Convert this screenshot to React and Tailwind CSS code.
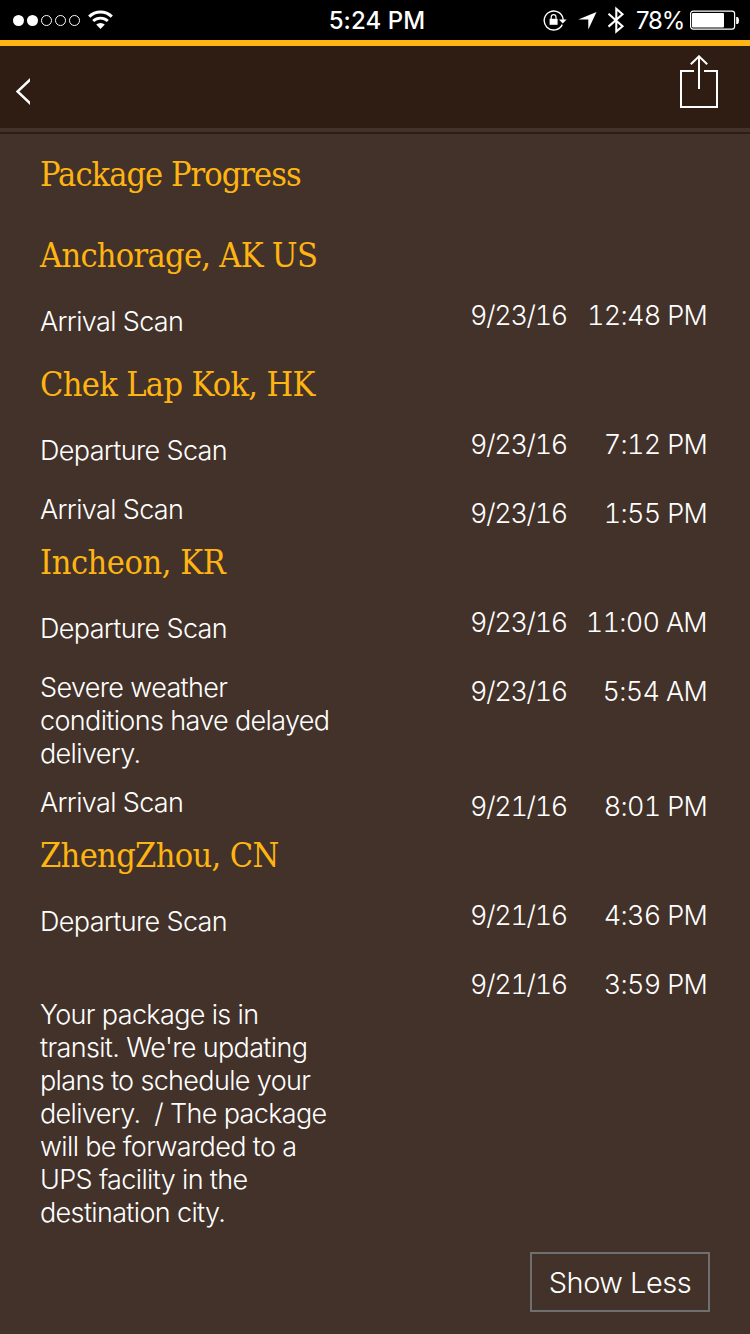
const sections = [
  {
    place: "Anchorage, AK US",
    gap: "mt-[41px]",
    track: "tracking-[-0.7px]",
    scans: [{ label: "Arrival Scan", date: "9/23/16", time: "12:48 PM", row: "", left: "pt-1.5", right: "" }],
  },
  {
    place: "Chek Lap Kok, HK",
    gap: "mt-[26px]",
    track: "tracking-[-0.65px]",
    scans: [
      { label: "Departure Scan", date: "9/23/16", time: "7:12 PM", row: "", left: "pt-1.5", right: "" },
      { label: "Arrival Scan", date: "9/23/16", time: "1:55 PM", row: "mt-[26px]", left: "", right: "pt-1" },
    ],
  },
  {
    place: "Incheon, KR",
    gap: "mt-3",
    track: "tracking-[-0.45px]",
    scans: [
      { label: "Departure Scan", date: "9/23/16", time: "11:00 AM", row: "", left: "pt-1.5", right: "" },
      {
        label: "Severe weather\nconditions have delayed\ndelivery.",
        date: "9/23/16",
        time: "5:54 AM",
        row: "mt-[26px]",
        left: "",
        right: "pt-1",
      },
      { label: "Arrival Scan", date: "9/21/16", time: "8:01 PM", row: "mt-4", left: "", right: "pt-1" },
    ],
  },
  {
    place: "ZhengZhou, CN",
    gap: "mt-3",
    track: "tracking-[-0.65px]",
    scans: [
      { label: "Departure Scan", date: "9/21/16", time: "4:36 PM", row: "", left: "pt-1.5", right: "" },
      {
        label:
          "Your package is in\ntransit. We're updating\nplans to schedule your\ndelivery.  / The package\nwill be forwarded to a\nUPS facility in the\ndestination city.",
        date: "9/21/16",
        time: "3:59 PM",
        row: "mt-[30px]",
        left: "pt-[30px]",
        right: "",
      },
    ],
  },
];

function StatusBar() {
  return (
    <div className="grid h-10 grid-cols-[1fr_auto_1fr] items-center bg-black text-white">
      <div className="flex items-center pl-[13px]">
        <svg width="102" height="20" viewBox="0 0 102 20" fill="none">
          <circle cx="5.5" cy="10.5" r="5.5" fill="#fff" />
          <circle cx="19.5" cy="10.5" r="5.5" fill="#fff" />
          <circle cx="33.5" cy="10.5" r="5" stroke="#fff" />
          <circle cx="47.5" cy="10.5" r="5" stroke="#fff" />
          <circle cx="61.5" cy="10.5" r="5" stroke="#fff" />
          <path d="M76.2 6.6a16 16 0 0 1 22.6 0" stroke="#fff" strokeWidth="3" />
          <path d="M80.2 11a10.6 10.6 0 0 1 14.6 0" stroke="#fff" strokeWidth="2.8" />
          <path d="M83.2 14.6a6.4 6.4 0 0 1 8.6 0L87.5 19z" fill="#fff" />
        </svg>
      </div>
      <div className="pl-1 pt-0.5 text-[24px] font-medium tracking-[0.1px]">5:24 PM</div>
      <div className="flex items-center justify-end pr-[11px]">
        <svg width="82" height="28" viewBox="0 0 82 28" fill="none">
          {/* rotation lock */}
          <path d="M19.3 18.6A9.5 9.5 0 1 1 20.2 14" stroke="#fff" strokeWidth="1.4" />
          <path d="M16 13.4h7.6L19.7 17.6z" fill="#fff" />
          <rect x="6.6" y="12.8" width="8" height="6" fill="#fff" />
          <path d="M8.2 13v-2a2.4 2.4 0 0 1 4.8 0v2" stroke="#fff" strokeWidth="1.2" />
          {/* location */}
          <path d="M53.5 6L35.3 13.6H45.3V23.6z" fill="#fff" />
          {/* bluetooth */}
          <path d="M65.5 7.8L79.5 20.2L73.3 25.5V2.8L79.5 8.2L65.5 20.6" stroke="#fff" strokeWidth="2.1" />
        </svg>
        <span className="ml-[11px] w-[54px] whitespace-nowrap pt-0.5 text-[24px] tracking-[-1.2px]">78%</span>
        <svg width="49" height="20" viewBox="0 0 49 20" fill="none">
          <rect x="0.6" y="1.1" width="44" height="18" rx="2.5" stroke="#fff" strokeWidth="1.2" />
          <rect x="2" y="3" width="32" height="14.5" rx="1" fill="#fff" />
          <path d="M46.2 7h1.5q1.3 1 1.3 3.5t-1.3 3.5h-1.5z" fill="#fff" />
        </svg>
      </div>
    </div>
  );
}

function NavBar() {
  return (
    <div className="flex h-[88px] justify-between border-t-6 border-[#ffb511] bg-[#2f1c12] pl-4 pr-8">
      <button aria-label="Back" className="mt-8 self-start">
        <svg width="14" height="28" viewBox="0 0 14 28" fill="none">
          <path d="M15 .8L1.5 13.5L15 26.2" stroke="#fff" strokeWidth="2.5" />
        </svg>
      </button>
      <button aria-label="Share" className="mt-[9px] self-start">
        <svg width="38" height="53" viewBox="0 0 38 53" fill="none">
          <path d="M14 16H1V52H37V16H24M19 34V1.5M10.8 9.3L19 1.3L27.2 9.3" stroke="#fff" strokeWidth="2" />
        </svg>
      </button>
    </div>
  );
}

function Heading({ children, className }) {
  return (
    <h2
      className={`h-10 whitespace-nowrap font-['DejaVu_Serif_Condensed','DejaVu_Serif',serif] text-[34px] font-stretch-condensed leading-10 text-[#ffb511] ${className}`}
    >
      {children}
    </h2>
  );
}

function ScanRow({ scan }) {
  return (
    <div className={`flex justify-between whitespace-nowrap text-[27px] font-light leading-[33px] ${scan.row}`}>
      <p className={`whitespace-pre tracking-[-0.65px] ${scan.left}`}>{scan.label}</p>
      <div className={`flex w-[237px] justify-between tabular-nums ${scan.right}`}>
        <span className="tracking-[-1.3px]">{scan.date}</span>
        <span className="tracking-[-0.7px]">{scan.time}</span>
      </div>
    </div>
  );
}

export default function App() {
  return (
    <div className="flex h-[1334px] w-[750px] flex-col overflow-hidden bg-[#433229] font-['Inter',sans-serif] text-white">
      <StatusBar />
      <NavBar />
      <div className="mt-1 h-0.5 shrink-0 bg-[#2f1c12]" />
      <main className="flex grow flex-col pl-10 pr-[43px] pt-5">
        <Heading className="tracking-[-0.95px]">Package Progress</Heading>
        {sections.map((section) => (
          <section key={section.place} className={section.gap}>
            <Heading className={`mb-6 ${section.track}`}>{section.place}</Heading>
            {section.scans.map((scan) => (
              <ScanRow key={scan.time} scan={scan} />
            ))}
          </section>
        ))}
        <button className="-mr-[3px] mt-[23px] h-[60px] w-[180px] self-end border-2 border-[#706f6f] pt-0.5 text-[29px] font-light tracking-[-0.5px]">
          Show Less
        </button>
      </main>
    </div>
  );
}
